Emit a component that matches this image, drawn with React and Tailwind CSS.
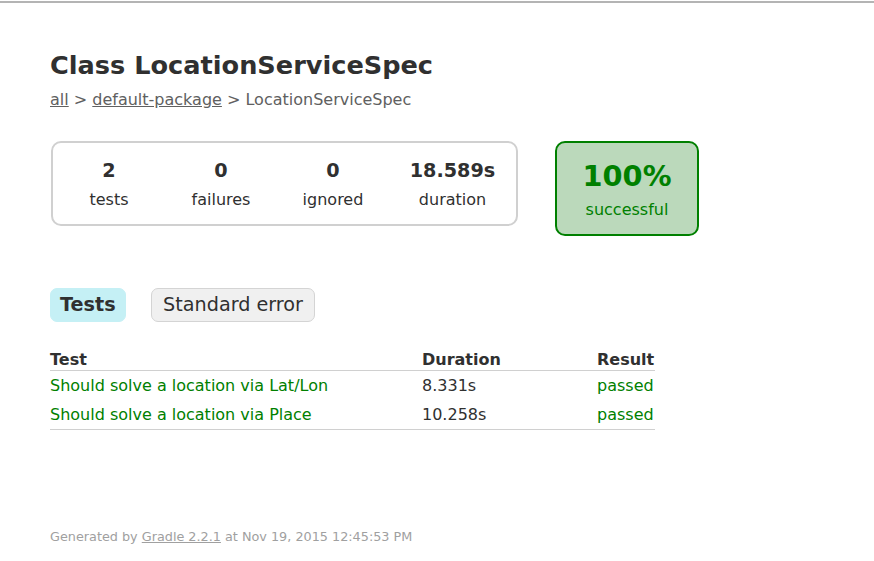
export default function App() {
  const stats = [
    { value: "2", label: "tests", w: "w-[112px]" },
    { value: "0", label: "failures", w: "w-[112px]" },
    { value: "0", label: "ignored", w: "w-[112px]" },
    { value: "18.589s", label: "duration", w: "w-[127px]" },
  ];
  const rows = [
    { name: "Should solve a location via Lat/Lon", duration: "8.331s" },
    { name: "Should solve a location via Place", duration: "10.258s" },
  ];

  return (
    <div className="min-h-[561px] bg-white pt-[1px] text-[#303030] text-[16px] font-['DejaVu_Sans',sans-serif]">
      <div className="h-[2px] bg-[#b4b4b4]" />
      <div className="px-[50px] pt-[47px]">
        <h1 className="text-[25.6px] font-bold leading-[30px] whitespace-nowrap">Class LocationServiceSpec</h1>
        <div className="mt-[10px] leading-[19px] text-[#606060]">
          <a className="underline">all</a> &gt; <a className="underline">default-package</a> &gt; LocationServiceSpec
        </div>

        <div className="mt-[32px] ml-[1px] flex items-start">
          <div className="flex rounded-[10px] border-2 border-[#d0d0d0]">
            {stats.map((s) => (
              <div key={s.label} className={`${s.w} pt-[17px] pb-[14px] text-center`}>
                <div className="text-[19.2px] font-bold leading-[22px] mb-[8px]">{s.value}</div>
                <div className="leading-[20px]">{s.label}</div>
              </div>
            ))}
          </div>
          <div className="ml-[37px] w-[144px] rounded-[10px] border-2 border-[#008000] bg-[#bbd9bb] pt-[16px] pb-[14px] text-center text-[#008000]">
            <div className="text-[28.8px] font-bold leading-[34px] mb-[7px]">100%</div>
            <div className="leading-[20px]">successful</div>
          </div>
        </div>

        <div className="mt-[52px] flex">
          <div className="rounded-[7px] border border-[#c5f0f5] bg-[#c5f0f5] px-[9px] py-[5px] text-[19.2px] font-bold leading-[22px] mr-[25px]">Tests</div>
          <div className="rounded-[7px] border border-[#d4d4d4] bg-[#f0f0f0] px-[11.5px] py-[5px] text-[19.2px] leading-[22px]">Standard error</div>
        </div>

        <table className="mt-[27px] w-[605px] table-fixed border-collapse border-b border-[#d0d0d0]">
          <thead>
            <tr className="border-b border-[#d0d0d0]">
              <th className="w-[276px] py-[1px] pl-0 text-left font-bold leading-[19px] whitespace-nowrap">Test</th>
              <th className="w-[175px] py-[1px] pl-[96px] text-left font-bold leading-[19px] whitespace-nowrap">Duration</th>
              <th className="w-[154px] py-[1px] pl-[96px] text-left font-bold leading-[19px] whitespace-nowrap">Result</th>
            </tr>
          </thead>
          <tbody>
            {rows.map((r) => (
              <tr key={r.name}>
                <td className="whitespace-nowrap py-[5px] text-[#008000] leading-[19px]">{r.name}</td>
                <td className="whitespace-nowrap pl-[96px] py-[5px] leading-[19px]">{r.duration}</td>
                <td className="whitespace-nowrap pl-[96px] py-[5px] text-[#008000] leading-[19px]">passed</td>
              </tr>
            ))}
          </tbody>
        </table>

        <div className="mt-[99px] text-[12.8px] leading-[15px] text-[#a0a0a0] whitespace-nowrap">
          Generated by <a className="underline">Gradle 2.2.1</a> at Nov 19, 2015 12:45:53 PM
        </div>
      </div>
    </div>
  );
}
